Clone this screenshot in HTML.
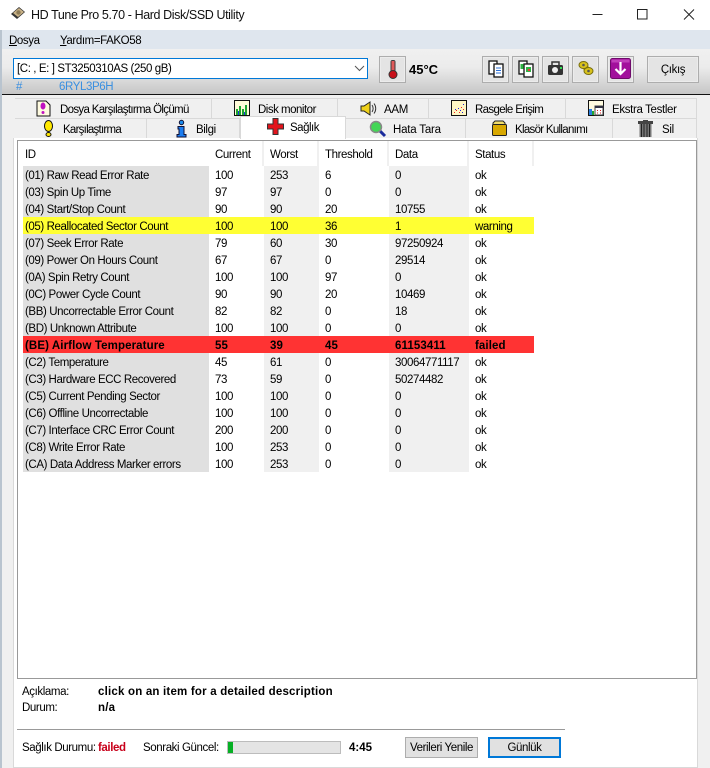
<!DOCTYPE html>
<html><head><meta charset="utf-8"><style>
html,body{margin:0;padding:0}
body{width:710px;height:768px;overflow:hidden;position:relative;background:#f0f0f0;font-family:"Liberation Sans",sans-serif;font-size:11.5px;color:#000;letter-spacing:-.4px}
.a{position:absolute;white-space:nowrap}
svg{position:absolute;overflow:visible}
.tab{position:absolute;height:20px;background:#f0f0f0;border-right:1px solid #d9d9d9;border-top:1px solid #d9d9d9;box-sizing:border-box}
.tl{position:absolute;top:4px;white-space:nowrap;line-height:14px;letter-spacing:-.6px}
.tb{position:absolute;top:56px;height:27px;box-sizing:border-box;border:1px solid #adadad;background:#e4e4e4;box-shadow:inset 0 0 0 1px #ececec}
table{position:absolute;left:23px;top:166px;border-collapse:collapse;table-layout:fixed;width:511px}
td{height:14px;padding:3px 0 0 6px;line-height:14px;white-space:nowrap;overflow:hidden}
td:nth-child(1){background:#e0e0e0;padding-left:2px}
td:nth-child(3),td:nth-child(5){background:#f0f0f0}
tr.y td{background:#ffff33}
tr.r td{background:#ff3333;font-weight:bold;letter-spacing:.1px}
.h{position:absolute;top:141px;height:25px;background:#fff;border-right:2px solid #f0f0f0;box-sizing:border-box;line-height:28px;padding-left:6px}
b{letter-spacing:.2px}
u{text-decoration:underline}
</style></head><body>
<div class="a" style="left:0;top:0;width:710px;height:30px;background:#fff"></div>
<svg style="left:10px;top:6px" width="16" height="15" viewBox="0 0 16 15"><path d="M1 8 9 1l6 5-8 7z" fill="#333"/><path d="M3 7 9 2l5 4-6 5z" fill="#c9b287"/><circle cx="8.500" cy="6.500" r="2.200" fill="#8c7a55"/></svg>
<div class="a" style="left:31px;top:7px;font-size:12.500px;line-height:16px;color:#111;letter-spacing:-.4px">HD Tune Pro 5.70 - Hard Disk/SSD Utility</div>
<svg style="left:592px;top:8px" width="110" height="16" viewBox="0 0 110 16" fill="none" stroke="#222"><path d="M.5 6.500h10"/><rect x="45.500" y="1.500" width="9.500" height="9.500"/><path d="M92 1.500l10 10M102 1.500l-10 10"/></svg>

<div class="a" style="left:0;top:30px;width:710px;height:19px;background:#dfe6ee"></div>
<div class="a" style="left:9px;top:34px;line-height:14px"><u>D</u>osya</div>
<div class="a" style="left:60px;top:34px;line-height:14px"><u>Y</u>ardım=FAKO58</div>

<div class="a" style="left:0;top:49px;width:710px;height:45px;background:linear-gradient(#f0f0f0 0,#ececec 40%,#c6c6c6 100%)"></div>
<div class="a" style="left:2px;top:94px;width:708px;height:1px;background:#111"></div>
<div class="a" style="left:0;top:30px;width:2px;height:738px;background:#b9c4cf"></div>

<div class="a" style="left:13px;top:58px;width:355px;height:21px;box-sizing:border-box;border:1px solid #0078d7;background:#fff;line-height:21px;padding-left:3px">[C: , E: ] ST3250310AS (250 gB)</div>
<svg style="left:354px;top:65px" width="11" height="7" viewBox="0 0 11 7" fill="none" stroke="#555"><path d="M1 1l4.500 4.500L10 1"/></svg>
<div class="a" style="left:16px;top:80px;line-height:14px;color:#3a8fe0">#</div>
<div class="a" style="left:59px;top:80px;line-height:14px;color:#3a8fe0">6RYL3P6H</div>

<div class="tb" style="left:379px;width:27px"></div>
<svg style="left:387px;top:59px" width="12" height="21" viewBox="0 0 12 21"><rect x="3.500" y="1" width="5" height="14" rx="2" fill="#3a3a3a"/><rect x="4.500" y="2" width="3" height="10" fill="#e05a5a"/><circle cx="6" cy="15.500" r="4" fill="#c8101a" stroke="#333"/></svg>
<div class="a" style="left:409px;top:62px;font-size:13px;font-weight:bold;line-height:16px;letter-spacing:0">45°C</div>

<div class="tb" style="left:482px;width:27px"></div>
<svg style="left:488px;top:60px" width="16" height="18" viewBox="0 0 16 18"><rect x="1" y="1" width="8" height="13" fill="#fff" stroke="#111" stroke-width="1.300"/><rect x="6" y="4" width="9" height="13" fill="#fff" stroke="#111" stroke-width="1.300"/><path d="M8 8h5M8 10.500h5M8 13h5" stroke="#2a6fd6"/></svg>
<div class="tb" style="left:512px;width:27px"></div>
<svg style="left:518px;top:60px" width="16" height="18" viewBox="0 0 16 18"><rect x="1" y="1" width="8" height="13" fill="#fff" stroke="#111" stroke-width="1.300"/><rect x="6" y="4" width="9" height="13" fill="#fff" stroke="#111" stroke-width="1.300"/><rect x="2.500" y="4" width="3" height="5" fill="#2fb344"/><rect x="8" y="7" width="5" height="5" fill="#2fb344"/><rect x="10" y="9" width="2" height="2" fill="#e33"/></svg>
<div class="tb" style="left:542px;width:27px"></div>
<svg style="left:547px;top:62px" width="17" height="14" viewBox="0 0 17 14"><rect x="5" y="0" width="7" height="4" fill="none" stroke="#333" stroke-width="1.500"/><rect x="1" y="3" width="15" height="10" rx="1.500" fill="#333"/><circle cx="8" cy="8" r="3" fill="#eee"/><rect x="13" y="5" width="2" height="2" fill="#3d5"/></svg>
<div class="tb" style="left:572px;width:27px"></div>
<svg style="left:578px;top:60px" width="16" height="17" viewBox="0 0 16 17"><path d="M3 3l3-2 7 8 2 3-3 3-3-1-6-7z" fill="#d8c21c"/><ellipse cx="5.500" cy="5" rx="4.500" ry="3.500" fill="#d8c21c" stroke="#776d10"/><ellipse cx="10.500" cy="11" rx="4.500" ry="3.500" fill="#d8c21c" stroke="#776d10"/><circle cx="5.500" cy="5" r="1.300" fill="#555"/><circle cx="10.500" cy="11" r="1.300" fill="#555"/></svg>
<div class="tb" style="left:607px;width:27px"></div>
<svg style="left:610px;top:58px" width="21" height="21" viewBox="0 0 21 21"><rect x=".5" y=".5" width="20" height="20" rx="2" fill="#a2109c" stroke="#6f0a6b"/><path d="M1.500 1.500h18v3h-18z" fill="#c040ba"/><path d="M10.500 4v12M5.500 11l5 5 5-5" fill="none" stroke="#fff" stroke-width="2.200"/></svg>
<div class="tb" style="left:647px;width:52px;line-height:27px;text-align:center">Çıkış</div>

<div class="tab" style="left:15px;top:98px;width:197px"><div class="tl" style="left:45px;letter-spacing:-.68px">Dosya Karşılaştırma Ölçümü</div>
<svg style="left:21px;top:1px" width="15" height="17" viewBox="0 0 15 17"><path d="M1 1h9l4 4v11H1z" fill="#fffbe0" stroke="#111"/><ellipse cx="7" cy="6" rx="2.500" ry="3.500" fill="#c013c0"/><circle cx="7" cy="12.500" r="1.500" fill="#c013c0"/></svg></div>
<div class="tab" style="left:212px;top:98px;width:126px"><div class="tl" style="left:46px;letter-spacing:-.5px">Disk monitor</div>
<svg style="left:22px;top:1px" width="17" height="17" viewBox="0 0 17 17"><rect x=".5" y=".5" width="15" height="15" fill="#fffbd8" stroke="#111"/><path d="M2 15V9h2v6zM5 15V6h2v9zM8 15V9h2v6zM11 15V5h2v10z" fill="#1fa531"/><path d="M4 15v-4h1v4zM10 15v-3h1v3z" fill="#1a3ddc"/></svg></div>
<div class="tab" style="left:338px;top:98px;width:91px"><div class="tl" style="left:46px;letter-spacing:-.3px">AAM</div>
<svg style="left:22px;top:2px" width="17" height="15" viewBox="0 0 17 15"><path d="M1 5h3l6-4v13l-6-4H1z" fill="#efd11a" stroke="#222"/><path d="M12 4c1.500 2 1.500 5 0 7M14 2.500c2.300 3 2.300 7 0 10" fill="none" stroke="#333"/></svg></div>
<div class="tab" style="left:429px;top:98px;width:137px"><div class="tl" style="left:46px;letter-spacing:-.65px">Rasgele Erişim</div>
<svg style="left:22px;top:1px" width="17" height="17" viewBox="0 0 17 17"><rect x=".5" y=".5" width="15" height="15" fill="#fff6c4" stroke="#111"/><path d="M3 12h1v1H3zM5 10h1v1H5zM8 12h1v1H8zM10 7h1v1h-1zM12 9h1v1h-1z" fill="#e22"/><path d="M4 9h1v1H4zM7 8h1v1H7zM9 10h1v1H9zM12 4h1v1h-1zM11 12h1v1h-1z" fill="#22d"/></svg></div>
<div class="tab" style="left:566px;top:98px;width:131px"><div class="tl" style="left:46px;letter-spacing:-.35px">Ekstra Testler</div>
<svg style="left:22px;top:1px" width="17" height="17" viewBox="0 0 17 17"><rect x=".5" y=".5" width="15" height="15" fill="#fffbe0" stroke="#111"/><rect x="1" y="9" width="3" height="6" fill="#2a7fe0"/><rect x="4" y="11" width="2" height="4" fill="#1fa531"/><rect x="7" y="6" width="8" height="9" fill="#fff" stroke="#444"/><rect x="7" y="6" width="8" height="2" fill="#334"/><path d="M9 10h1v1H9zM12 10h1v1h-1zM9 12.500h1v1H9zM12 12.500h1v1h-1z" fill="#d22"/></svg></div>

<div class="tab" style="left:15px;top:118px;width:132px"><div class="tl" style="left:48px;letter-spacing:-.75px">Karşılaştırma</div>
<svg style="left:28px;top:1px" width="11" height="18" viewBox="0 0 11 18"><ellipse cx="5.500" cy="6" rx="4" ry="5.500" fill="#ffe800" stroke="#111"/><ellipse cx="5.500" cy="14.500" rx="2.500" ry="2" fill="#ffe800" stroke="#111"/></svg></div>
<div class="tab" style="left:147px;top:118px;width:93px"><div class="tl" style="left:49px;letter-spacing:-.4px">Bilgi</div>
<svg style="left:29px;top:1px" width="11" height="18" viewBox="0 0 11 18"><circle cx="5.500" cy="2.500" r="2.200" fill="#1a8cf0" stroke="#113"/><path d="M2 6.500h6v8h2V17H1v-2.500h2v-5.500H2z" fill="#1a7cf0" stroke="#113"/></svg></div>
<div class="tab" style="left:346px;top:118px;width:120px"><div class="tl" style="left:47px;letter-spacing:-.2px">Hata Tara</div>
<svg style="left:23px;top:1px" width="18" height="18" viewBox="0 0 18 18"><path d="M10 10l6 6" stroke="#1a2b9c" stroke-width="3"/><circle cx="7" cy="7" r="5.500" fill="#43d656" stroke="#888" stroke-width="1.500"/></svg></div>
<div class="tab" style="left:466px;top:118px;width:147px"><div class="tl" style="left:49px;letter-spacing:-.7px">Klasör Kullanımı</div>
<svg style="left:25px;top:1px" width="17" height="17" viewBox="0 0 17 17"><path d="M2 3l2-2h8l2 2v2H2z" fill="#f0dc6a" stroke="#222"/><rect x="1.500" y="4.500" width="14" height="11" rx="1" fill="#d8a800" stroke="#222"/></svg></div>
<div class="tab" style="left:613px;top:118px;width:84px;border-right:1px solid #d9d9d9"><div class="tl" style="left:49px;letter-spacing:-.3px">Sil</div>
<svg style="left:25px;top:1px" width="15" height="17" viewBox="0 0 15 17"><rect x="0" y="1" width="15" height="3" fill="#444"/><rect x="5" y="0" width="5" height="2" fill="#444"/><rect x="1.500" y="4" width="12" height="13" fill="#777"/><path d="M3.500 4v13M6 4v13M9 4v13M11.500 4v13" stroke="#222"/></svg></div>

<div class="a" style="left:13px;top:138px;width:685px;height:630px;background:#fff;border-left:1px solid #d9d9d9;border-right:1px solid #d9d9d9;border-bottom:1px solid #d9d9d9;box-sizing:border-box"></div>
<div class="a" style="left:17px;top:140px;width:680px;height:539px;box-sizing:border-box;border:1px solid #999;background:#fff"></div>

<div class="tab" style="left:240px;top:116px;width:106px;height:23px;background:#fff;border-left:1px solid #d9d9d9;z-index:3"><div class="tl" style="left:49px;top:4px;letter-spacing:-.5px">Sağlık</div>
<svg style="left:26px;top:1px" width="17" height="17" viewBox="0 0 17 17"><path d="M6 .5h5v5.500h5.500v5H11v5.500H6V11H.5V6H6z" fill="#e3141c" stroke="#333"/></svg></div>

<div class="h" style="left:19px;width:190px;border:0;padding-left:6px">ID</div>
<div class="h" style="left:209px;width:55px">Current</div>
<div class="h" style="left:264px;width:55px">Worst</div>
<div class="h" style="left:319px;width:70px">Threshold</div>
<div class="h" style="left:389px;width:80px">Data</div>
<div class="h" style="left:469px;width:65px">Status</div>

<table><colgroup><col style="width:186px"><col style="width:55px"><col style="width:55px"><col style="width:70px"><col style="width:80px"><col style="width:65px"></colgroup>
<tr><td>(01) Raw Read Error Rate</td><td>100</td><td>253</td><td>6</td><td>0</td><td>ok</td></tr>
<tr><td>(03) Spin Up Time</td><td>97</td><td>97</td><td>0</td><td>0</td><td>ok</td></tr>
<tr><td>(04) Start/Stop Count</td><td>90</td><td>90</td><td>20</td><td>10755</td><td>ok</td></tr>
<tr class="y"><td>(05) Reallocated Sector Count</td><td>100</td><td>100</td><td>36</td><td>1</td><td>warning</td></tr>
<tr><td>(07) Seek Error Rate</td><td>79</td><td>60</td><td>30</td><td>97250924</td><td>ok</td></tr>
<tr><td>(09) Power On Hours Count</td><td>67</td><td>67</td><td>0</td><td>29514</td><td>ok</td></tr>
<tr><td>(0A) Spin Retry Count</td><td>100</td><td>100</td><td>97</td><td>0</td><td>ok</td></tr>
<tr><td>(0C) Power Cycle Count</td><td>90</td><td>90</td><td>20</td><td>10469</td><td>ok</td></tr>
<tr><td>(BB) Uncorrectable Error Count</td><td>82</td><td>82</td><td>0</td><td>18</td><td>ok</td></tr>
<tr><td>(BD) Unknown Attribute</td><td>100</td><td>100</td><td>0</td><td>0</td><td>ok</td></tr>
<tr class="r"><td>(BE) Airflow Temperature</td><td>55</td><td>39</td><td>45</td><td>61153411</td><td>failed</td></tr>
<tr><td>(C2) Temperature</td><td>45</td><td>61</td><td>0</td><td>30064771117</td><td>ok</td></tr>
<tr><td>(C3) Hardware ECC Recovered</td><td>73</td><td>59</td><td>0</td><td>50274482</td><td>ok</td></tr>
<tr><td>(C5) Current Pending Sector</td><td>100</td><td>100</td><td>0</td><td>0</td><td>ok</td></tr>
<tr><td>(C6) Offline Uncorrectable</td><td>100</td><td>100</td><td>0</td><td>0</td><td>ok</td></tr>
<tr><td>(C7) Interface CRC Error Count</td><td>200</td><td>200</td><td>0</td><td>0</td><td>ok</td></tr>
<tr><td>(C8) Write Error Rate</td><td>100</td><td>253</td><td>0</td><td>0</td><td>ok</td></tr>
<tr><td>(CA) Data Address Marker errors</td><td>100</td><td>253</td><td>0</td><td>0</td><td>ok</td></tr>
</table>

<div class="a" style="left:22px;top:685px;line-height:14px">Açıklama:</div>
<div class="a" style="left:98px;top:685px;line-height:14px;font-weight:bold;letter-spacing:.2px">click on an item for a detailed description</div>
<div class="a" style="left:22px;top:701px;line-height:14px">Durum:</div>
<div class="a" style="left:98px;top:701px;line-height:14px;font-weight:bold;letter-spacing:.2px">n/a</div>
<div class="a" style="left:17px;top:729px;width:548px;height:1px;background:#999"></div>

<div class="a" style="left:22px;top:741px;line-height:14px">Sağlık Durumu:</div>
<div class="a" style="left:98px;top:741px;line-height:14px;font-weight:bold;color:#c8001a">failed</div>
<div class="a" style="left:143px;top:741px;line-height:14px">Sonraki Güncel:</div>
<div class="a" style="left:227px;top:741px;width:114px;height:13px;box-sizing:border-box;background:#e4e4e4;border:1px solid #bcbcbc"><div style="width:5px;height:11px;background:#06b025"></div></div>
<div class="a" style="left:349px;top:741px;line-height:14px;font-weight:bold;letter-spacing:0">4:45</div>
<div class="a" style="left:405px;top:737px;width:73px;height:21px;box-sizing:border-box;border:1px solid #adadad;background:#e1e1e1;text-align:center;line-height:21px">Verileri Yenile</div>
<div class="a" style="left:488px;top:737px;width:73px;height:21px;box-sizing:border-box;border:2px solid #0078d7;background:#e1e1e1;text-align:center;line-height:19px">Günlük</div>
</body></html>
